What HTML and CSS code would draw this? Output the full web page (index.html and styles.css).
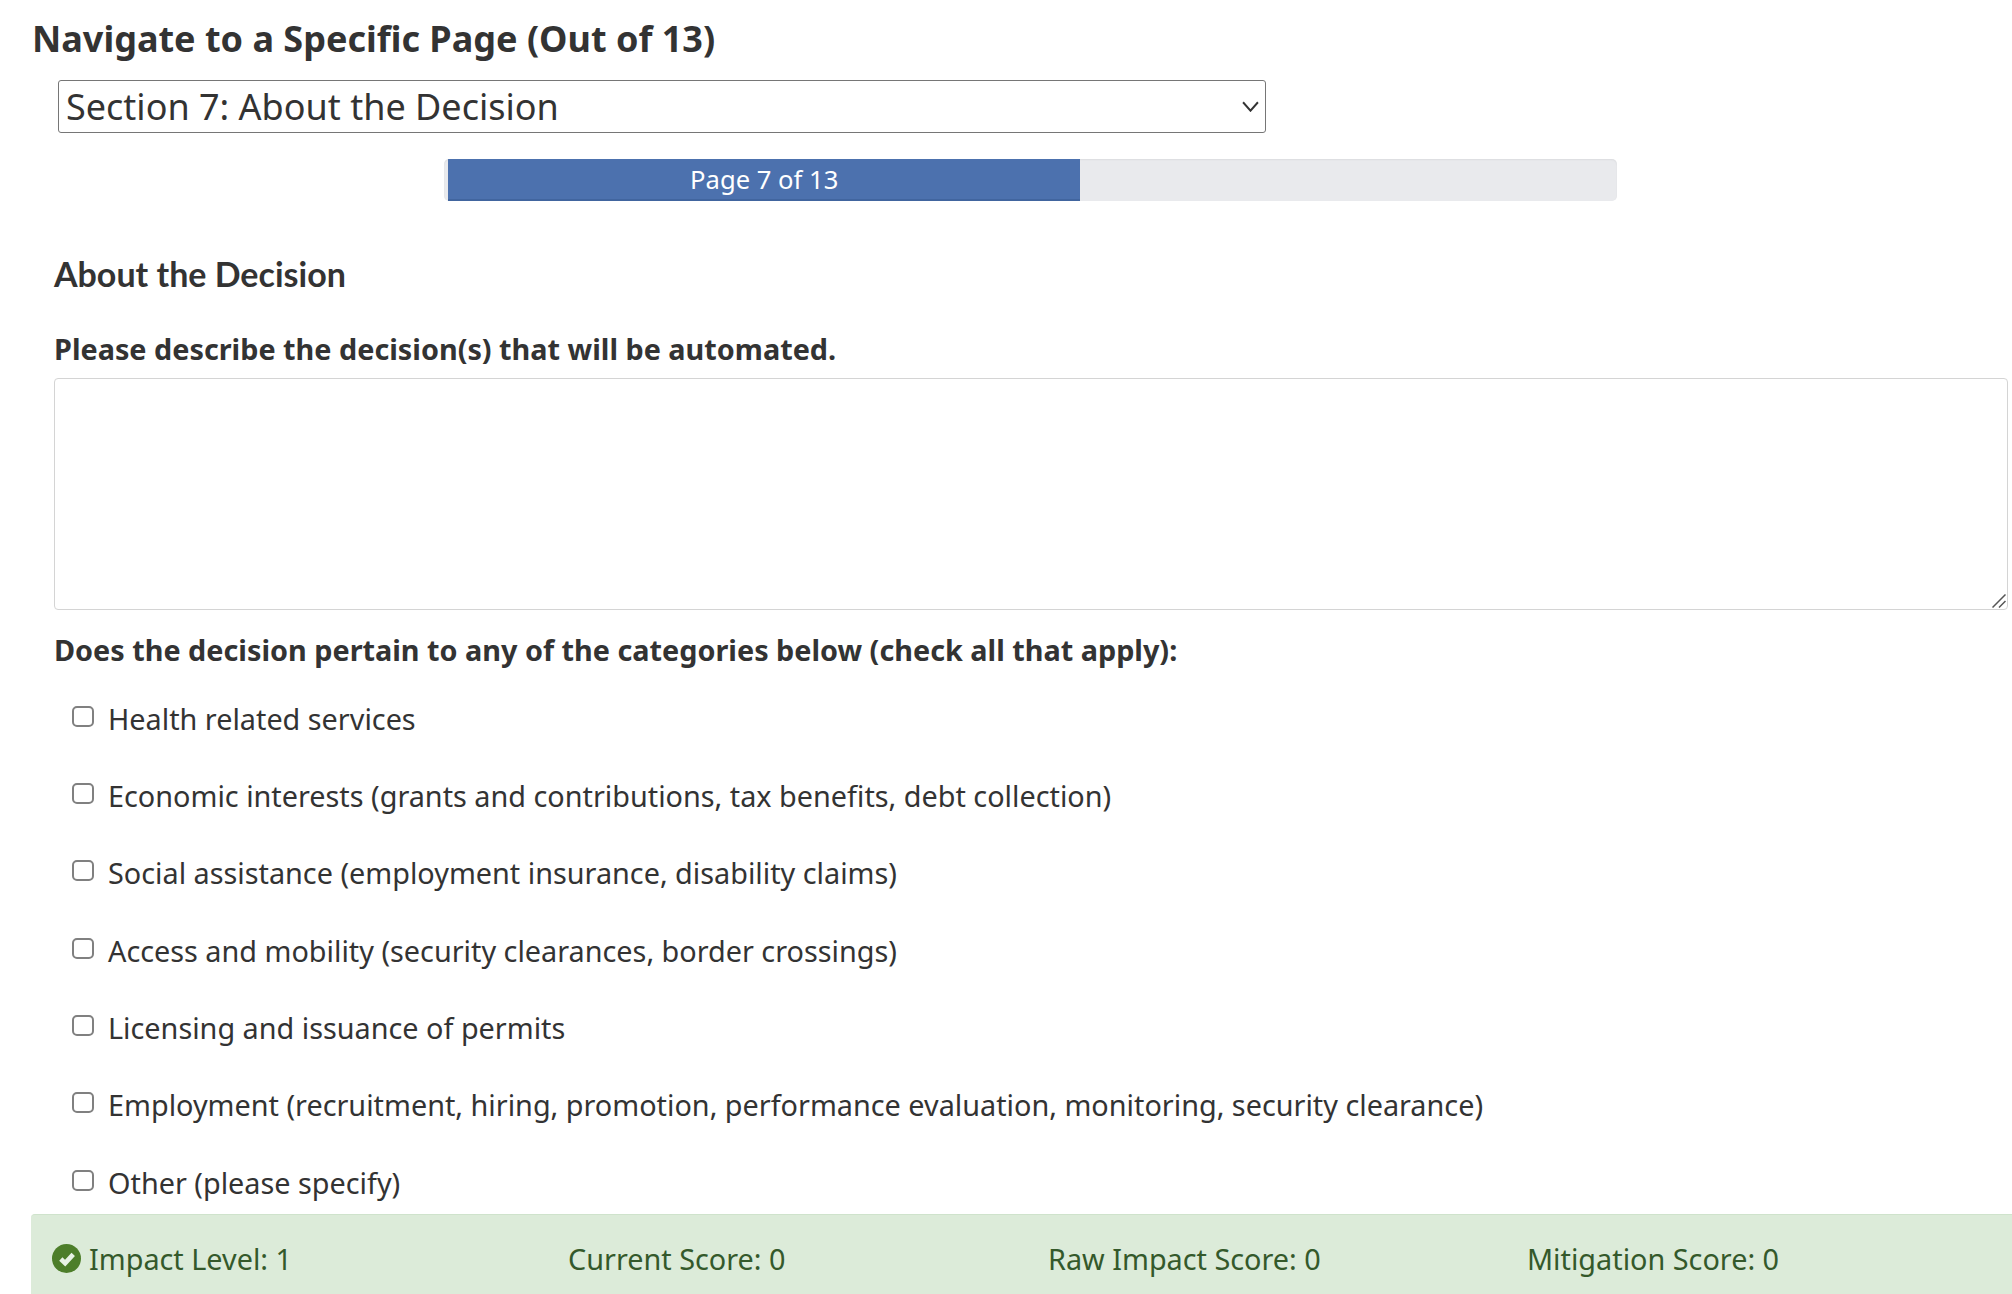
FILE: index.html
```html
<!DOCTYPE html>
<html lang="en">
<head>
<meta charset="utf-8">
<title>About the Decision</title>
<link rel="stylesheet" href="styles.css">
</head>
<body>
<main class="page">
  <h2 class="nav-title">Navigate to a Specific Page (Out of 13)</h2>
  <div class="nav-select-wrap">
    <select class="nav-select">
      <option>Section 7: About the Decision</option>
    </select>
    <svg class="select-arrow" viewBox="0 0 16 10" aria-hidden="true"><path d="M1 1l7 8 7-8"/></svg>
  </div>
  <div class="progress">
    <div class="progress-fill" style="width: 54.1%">Page 7 of 13</div>
  </div>
  <section class="form">
    <h3 class="section-title">About the Decision</h3>
    <label class="q-label" for="desc">Please describe the decision(s) that will be automated.</label>
    <div class="q-text-wrap">
      <textarea class="q-text" id="desc"></textarea>
      <svg class="grip" viewBox="0 0 14 14" aria-hidden="true"><path d="M0.500 13.500L13.500 0.500M7 13.500L13.500 7"/></svg>
    </div>
    <p class="q-label q-label-2">Does the decision pertain to any of the categories below (check all that apply):</p>
    <ul class="checks">
      <li><label class="check"><input type="checkbox"><span>Health related services</span></label></li>
      <li><label class="check"><input type="checkbox"><span>Economic interests (grants and contributions, tax benefits, debt collection)</span></label></li>
      <li><label class="check"><input type="checkbox"><span>Social assistance (employment insurance, disability claims)</span></label></li>
      <li><label class="check"><input type="checkbox"><span>Access and mobility (security clearances, border crossings)</span></label></li>
      <li><label class="check"><input type="checkbox"><span>Licensing and issuance of permits</span></label></li>
      <li><label class="check"><input type="checkbox"><span>Employment (recruitment, hiring, promotion, performance evaluation, monitoring, security clearance)</span></label></li>
      <li><label class="check"><input type="checkbox"><span>Other (please specify)</span></label></li>
    </ul>
  </section>
</main>
<footer class="score-bar">
  <div class="score score-first">
    <svg class="ok-icon" viewBox="0 0 28 28" aria-hidden="true"><circle class="ok-disc" cx="14" cy="14" r="14"/><path class="ok-tick" d="M8.500 14.500L12.700 18.500L20.500 10"/></svg>
    <span>Impact Level: 1</span>
  </div>
  <div class="score">Current Score: 0</div>
  <div class="score">Raw Impact Score: 0</div>
  <div class="score">Mitigation Score: 0</div>
</footer>
</body>
</html>
```
FILE: styles.css
```css
* { box-sizing: border-box; }
html, body { margin: 0; padding: 0; height: 100%; overflow: hidden; background: #fff; }
body {
  font-family: "Noto Sans", sans-serif;
  color: #333;
  width: 2012px;
  height: 1294px;
  display: flex;
  flex-direction: column;
}
.page { flex: 1; min-height: 0; padding: 17px 4px 0 32px; }
.nav-title { margin: 0; font-size: 36px; line-height: 44px; font-weight: 700; }
.nav-select-wrap { position: relative; width: 1208px; margin: 19px 0 0 26px; }
.nav-select {
  display: block;
  width: 100%;
  height: 53px;
  font-family: "Noto Sans", sans-serif;
  font-size: 36px;
  color: #333;
  background: #fff;
  border: 1.5px solid #767676;
  border-radius: 3px;
  padding: 0 3px 0 7px;
  appearance: none;
  -webkit-appearance: none;
}
.select-arrow {
  position: absolute;
  right: 7px;
  top: 21px;
  width: 17px;
  height: 11px;
  fill: none;
  stroke: #333;
  stroke-width: 1.8;
  pointer-events: none;
}
.progress {
  margin: 26px 0 0 412px;
  width: 1173px;
  height: 42px;
  background: #e9eaed;
  box-shadow: inset 0 1px 2px rgba(0, 0, 0, 0.06);
  border-radius: 5px;
  padding-left: 4px;
  overflow: hidden;
}
.progress-fill {
  height: 100%;
  background: #4c71ae;
  border-bottom: 2px solid #41659f;
  color: #fff;
  font-size: 25.600px;
  line-height: 41px;
  text-align: center;
}
.form { margin: 0 0 0 22px; }
.section-title {
  margin: 51px 0 0;
  font-family: Lato, sans-serif;
  font-size: 34px;
  line-height: 44px;
  font-weight: 700;
}
.q-label { display: block; margin: 0; font-size: 28.800px; line-height: 40px; font-weight: 700; }
.section-title + .q-label { margin-top: 33px; }
.q-text-wrap { position: relative; width: 1954px; margin-top: 9px; }
.q-text {
  display: block;
  width: 100%;
  height: 232px;
  border: 1.5px solid #d4d4d4;
  border-radius: 4px;
  background: #fff;
  font: inherit;
  resize: none;
}
.grip {
  position: absolute;
  right: 2px;
  bottom: 2px;
  width: 14px;
  height: 14px;
  fill: none;
  stroke: #555;
  stroke-width: 1.500;
  pointer-events: none;
}
.q-label-2 { margin-top: 20px; }
.checks { list-style: none; margin: 0; padding: 28px 0 0 18px; display: grid; row-gap: 37.400px; }
.check { display: flex; align-items: center; column-gap: 14px; height: 40px; font-size: 28.800px; }
.check input {
  appearance: none;
  -webkit-appearance: none;
  width: 22px;
  height: 21px;
  margin: -4px 0 0 0;
  flex: none;
  background: #fff;
  border: 2px solid #808080;
  border-radius: 5px;
}
.score-bar {
  flex: none;
  height: 80px;
  margin-left: 31px;
  width: 2000px;
  padding: 8px 8px 0 21px;
  background: #dcebd9;
  border-top: 1px solid #cfe3cc;
  border-radius: 4px 0 0 0;
  color: #34592b;
  font-size: 28.800px;
  display: grid;
  grid-template-columns: 516px 480px 479px 1fr;
  align-items: center;
}
.score-first { display: flex; align-items: center; column-gap: 8px; }
.ok-icon { width: 29px; height: 29px; flex: none; }
.ok-disc { fill: #4d7e2a; }
.ok-tick { fill: none; stroke: #e8f2e5; stroke-width: 4.500; }
```
